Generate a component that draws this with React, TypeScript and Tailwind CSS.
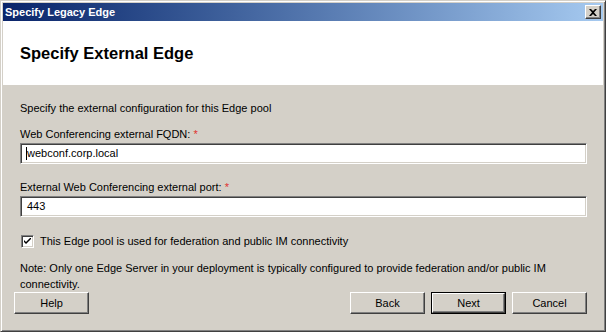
import React from "react"

const font = "font-['Liberation_Sans',Arial,sans-serif]"

function Raised({ label, isDefault }: { label: string; isDefault?: boolean }) {
  return (
    <div className={isDefault ? "border border-black" : ""}>
      <div
        className={`flex items-center justify-center bg-[#d4d0c8] border border-t-white border-l-white border-r-[#404040] border-b-[#404040] shadow-[inset_-1px_-1px_0_#808080] text-[11px] text-black ${
          isDefault ? "w-[73px] h-[20px]" : "w-[75px] h-[22px]"
        }`}
      >
        {label}
      </div>
    </div>
  )
}

function Field({ value, cursor }: { value: string; cursor?: boolean }) {
  return (
    <div className="h-[21px] bg-white border border-t-[#808080] border-l-[#808080] border-r-white border-b-white shadow-[inset_1px_1px_0_#404040,inset_-1px_-1px_0_#d4d0c8] flex items-center pl-[6px] text-[11px] text-black">
      {cursor && <span className="w-px h-[13px] bg-black -ml-px" />}
      {value}
    </div>
  )
}

export default function App() {
  return (
    <div
      className={`${font} w-[606px] h-[332px] bg-[#d4d0c8] border border-t-[#d4d0c8] border-l-[#d4d0c8] border-r-[#404040] border-b-[#404040] shadow-[inset_1px_1px_0_#fff,inset_-1px_-1px_0_#808080] p-[2px] flex flex-col`}
    >
      <div className="h-[18px] flex items-center justify-between bg-gradient-to-r from-[#0a246a] to-[#a6caf0] pl-[2px] pr-[2px]">
        <span className="text-white font-bold text-[11px]">Specify Legacy Edge</span>
        <div className="w-[16px] h-[14px] bg-[#d4d0c8] border border-t-white border-l-white border-r-[#404040] border-b-[#404040] shadow-[inset_-1px_-1px_0_#808080] flex items-center justify-center">
          <svg width="8" height="7" viewBox="0 0 8 7">
            <path d="M0 0h2l2 2 2-2h2L5 3.5 8 7H6L4 5 2 7H0l3-3.5z" fill="#000" />
          </svg>
        </div>
      </div>
      <div className="h-[64px] bg-white flex items-center pl-[17px]">
        <span className="text-[16.5px] font-bold text-black">Specify External Edge</span>
      </div>
      <div className="flex-1 flex flex-col pl-[17px] pr-[16px] text-[11px] text-black leading-[13px]">
        <div className="mt-[17px]">Specify the external configuration for this Edge pool</div>
        <div className="mt-[13px]">
          Web Conferencing external FQDN: <span className="text-[#e03030]">*</span>
        </div>
        <div className="mt-[2px]">
          <Field value="webconf.corp.local" cursor />
        </div>
        <div className="mt-[17px]">
          External Web Conferencing external port: <span className="text-[#e03030]">*</span>
        </div>
        <div className="mt-[2px]">
          <Field value="443" />
        </div>
        <div className="mt-[18px] flex items-center gap-[6px] pl-[1px]">
          <div className="w-[13px] h-[13px] bg-white border border-t-[#808080] border-l-[#808080] border-r-white border-b-white shadow-[inset_1px_1px_0_#404040,inset_-1px_-1px_0_#d4d0c8] flex items-center justify-center">
            <svg width="7" height="7" viewBox="0 0 7 7">
              <path d="M0 2l2 2 5-5v2L2 6 0 4z" fill="#000" />
            </svg>
          </div>
          <span>This Edge pool is used for federation and public IM connectivity</span>
        </div>
        <div className="mt-[12px] leading-[16px]">
          Note: Only one Edge Server in your deployment is typically configured to provide federation and/or public IM
          connectivity.
        </div>
        <div className="flex items-start -ml-[6px]">
          <Raised label="Help" />
          <div className="flex-1" />
          <div className="flex gap-[6px]">
            <Raised label="Back" />
            <Raised label="Next" isDefault />
            <Raised label="Cancel" />
          </div>
        </div>
      </div>
    </div>
  )
}
